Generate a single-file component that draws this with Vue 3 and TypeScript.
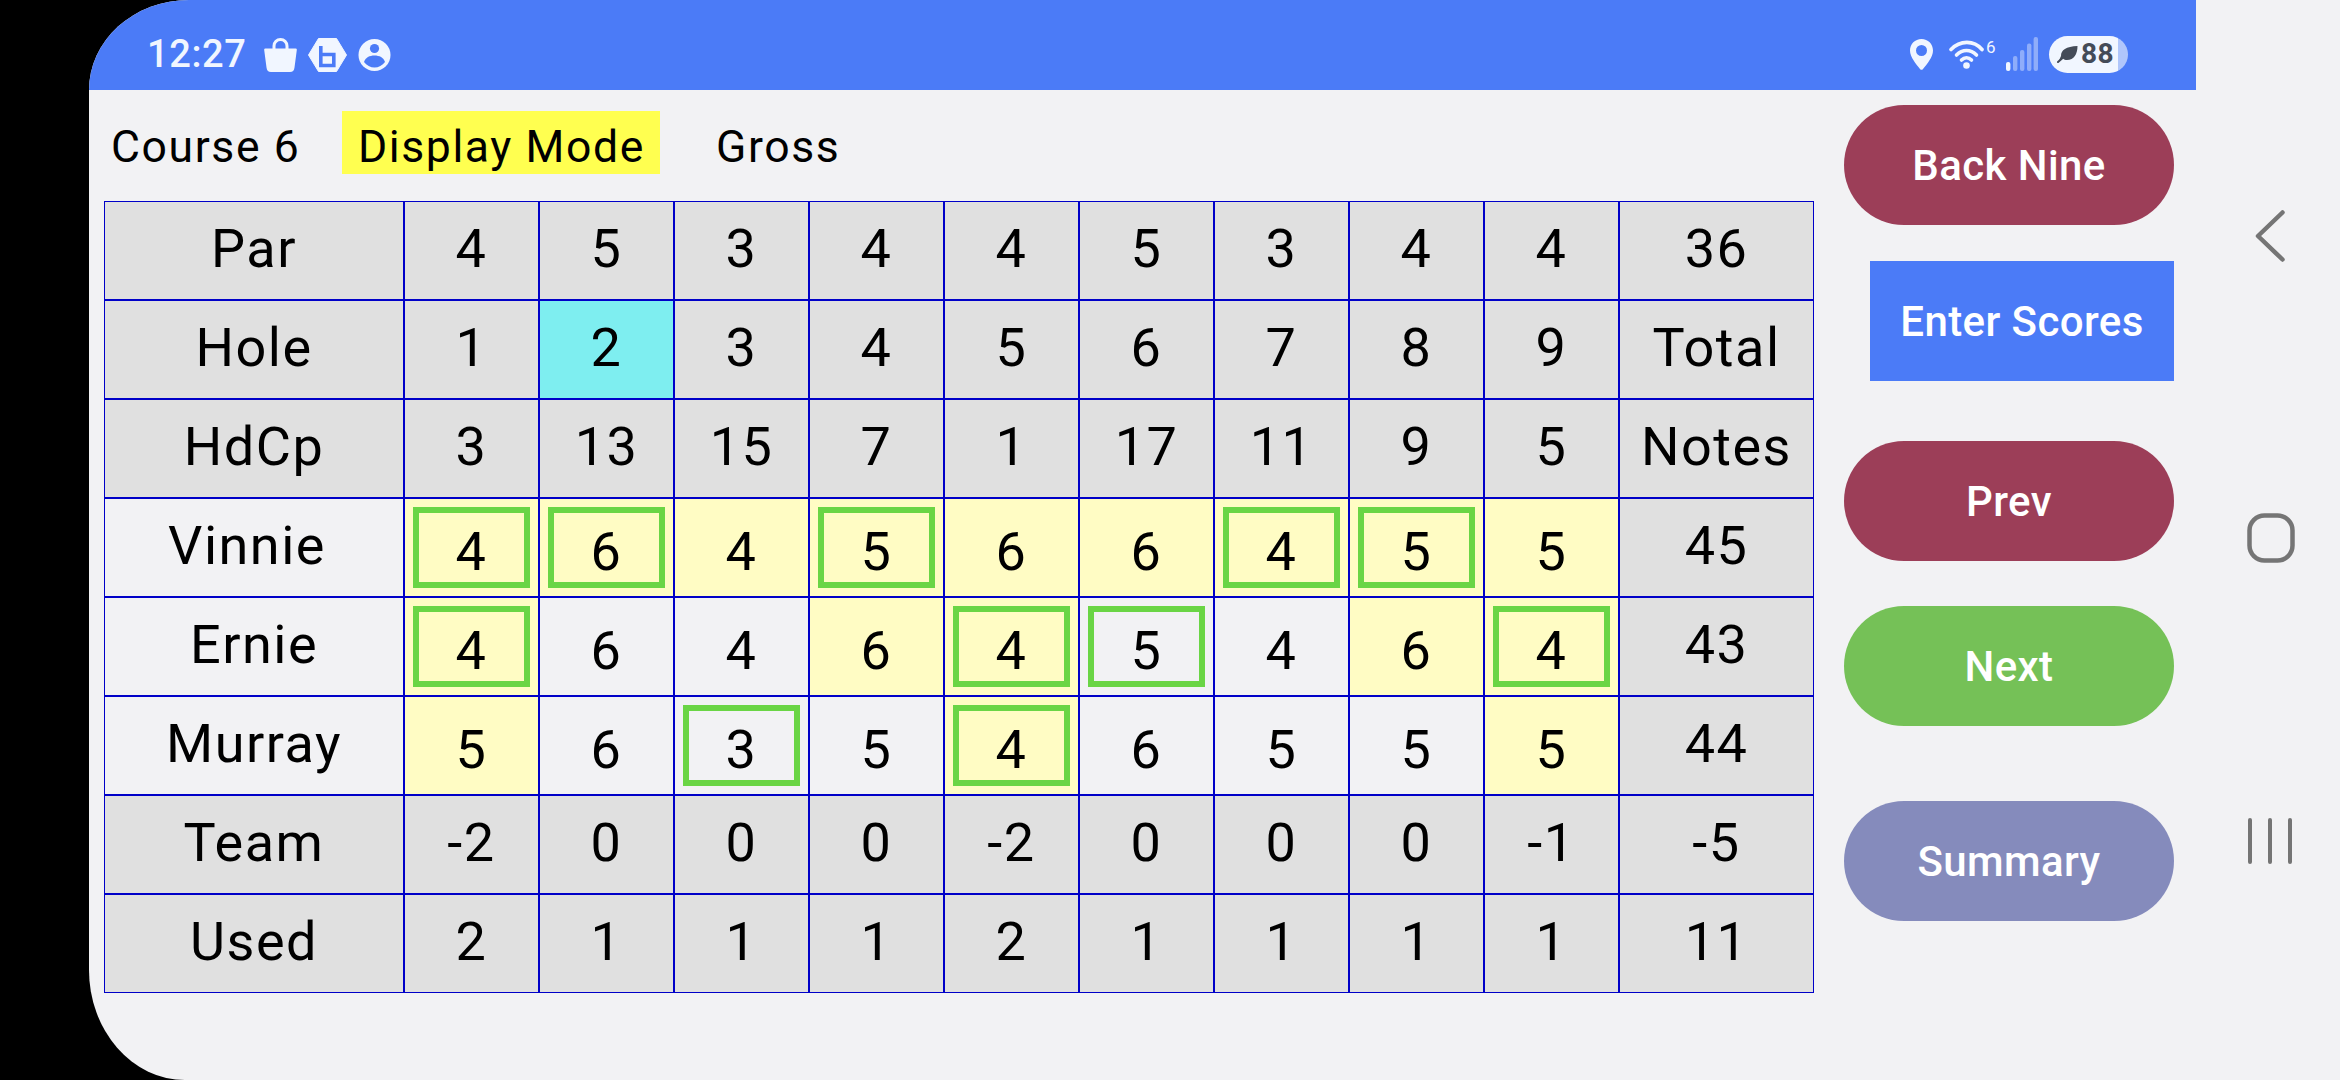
<script setup lang="ts">
interface Cell { v: string; y?: boolean; box?: boolean; hl?: boolean }

const gray = (vals: string[]): Cell[] => vals.map((v) => ({ v }));
const grayRows = [
  { name: 'Par', cells: gray(['4', '5', '3', '4', '4', '5', '3', '4', '4']), last: '36' },
  {
    name: 'Hole',
    cells: [{ v: '1' }, { v: '2', hl: true }, ...gray(['3', '4', '5', '6', '7', '8', '9'])],
    last: 'Total',
  },
  { name: 'HdCp', cells: gray(['3', '13', '15', '7', '1', '17', '11', '9', '5']), last: 'Notes' },
];
const bottomRows = [
  { name: 'Team', cells: gray(['-2', '0', '0', '0', '-2', '0', '0', '0', '-1']), last: '-5' },
  { name: 'Used', cells: gray(['2', '1', '1', '1', '2', '1', '1', '1', '1']), last: '11' },
];
const c = (v: string, y = false, box = false): Cell => ({ v, y, box });
const players = [
  {
    name: 'Vinnie',
    shift: true,
    cells: [c('4', true, true), c('6', true, true), c('4', true), c('5', true, true), c('6', true), c('6', true), c('4', true, true), c('5', true, true), c('5', true)],
    last: '45',
  },
  {
    name: 'Ernie',
    shift: false,
    cells: [c('4', true, true), c('6'), c('4'), c('6', true), c('4', true, true), c('5', false, true), c('4'), c('6', true), c('4', true, true)],
    last: '43',
  },
  {
    name: 'Murray',
    shift: false,
    cells: [c('5', true), c('6'), c('3', false, true), c('5'), c('4', true, true), c('6'), c('5'), c('5'), c('5', true)],
    last: '44',
  },
];
</script>

<template>
  <div class="device">
    <div class="gutter"></div>
    <div class="screen">
      <div class="main">
        <div class="status">
          <div class="status-left">
            <span class="clock">12:27</span>
            <svg class="i-bag" width="33" height="34" viewBox="0 0 33 34">
              <path d="M10 12V8a6.5 6.5 0 0 1 13 0v4" fill="none" stroke="#f1f6ff" stroke-width="3" />
              <path d="M1.5 10.5H31.500a1.300 1.300 0 0 1 1.300 1.500L30.500 29.500Q30 34 26 34H7Q3 34 2.500 29.500L.2 12a1.300 1.300 0 0 1 1.300-1.500Z" fill="#f1f6ff" />
            </svg>
            <svg class="i-hex" width="39" height="34" viewBox="0 0 39 34">
              <path d="M10.500 0.500H28.500L38.500 17 28.500 33.500H10.500L0.500 17Z" fill="#f1f6ff" stroke="#f1f6ff" stroke-linejoin="round" />
              <path d="M12.800 8V27.500H25.800V16.500H12.800" fill="none" stroke="#4b7bf7" stroke-width="3.600" />
            </svg>
            <svg class="i-person" width="33" height="32" viewBox="0 0 33 32">
              <circle cx="16.500" cy="16" r="16" fill="#f1f6ff" />
              <circle cx="16.500" cy="9.500" r="4.600" fill="#4b7bf7" />
              <path d="M6 23C7.500 18.500 11.500 16.500 16.500 16.500S25.500 18.500 27 23C24.500 26.500 20.500 28.500 16.500 28.500S8.500 26.500 6 23Z" fill="#4b7bf7" />
            </svg>
          </div>
          <div class="status-right">
            <svg width="23" height="31" viewBox="0 0 23 31">
              <path fill-rule="evenodd" d="M11.500 0C5 0 0 5 0 11.500 0 18 6 25 10 30a2 2 0 0 0 3 0C17 25 23 18 23 11.500 23 5 18 0 11.500 0ZM11.500 6a5.500 5.500 0 1 1 0 11 5.500 5.500 0 0 1 0-11Z" fill="#f1f6ff" />
            </svg>
            <svg class="i-wifi" width="35" height="29" viewBox="0 0 35 29">
              <g fill="none" stroke="#f1f6ff" stroke-width="3.600" stroke-linecap="round">
                <path d="M2 9.500C11 0 25 0 33 9.500" />
                <path d="M7.500 15C13.500 9 21.500 9 27.500 15" />
                <path d="M12.500 20C15.500 17 19.500 17 22.500 20" />
              </g>
              <circle cx="17.500" cy="25.500" r="3.300" fill="#f1f6ff" />
            </svg>
            <span class="wifi-six">6</span>
            <svg class="i-signal" width="32" height="34" viewBox="0 0 32 34">
              <rect x="0" y="25" width="4.400" height="9" rx="2" fill="#f1f6ff" />
              <rect x="7" y="19" width="4.400" height="15" rx="2" fill="#8fadfa" />
              <rect x="14" y="13" width="4.400" height="21" rx="2" fill="#8fadfa" />
              <rect x="21" y="6.500" width="4.400" height="27.500" rx="2" fill="#8fadfa" />
              <rect x="27.600" y="0" width="4.400" height="34" rx="2" fill="#8fadfa" />
            </svg>
            <div class="battery">
              <svg width="21" height="18" viewBox="0 0 21 18">
                <path d="M4 11C4 5 9 1.500 20.500 1 20.500 9 17 15 10 15 8.500 15 7 14.500 6 13.500L1.500 16.500" fill="#444b58" />
                <path d="M1 17 9 10" stroke="#444b58" stroke-width="2" stroke-linecap="round" />
              </svg>
              <span class="batt-num">88</span>
            </div>
          </div>
        </div>

        <div class="content">
          <div class="left">
            <div class="head">
              <span class="course">Course 6</span>
              <span class="mode">Display Mode</span>
              <span class="gross">Gross</span>
            </div>
            <div class="grid">
              <template v-for="r in grayRows" :key="r.name">
                <div class="cell gray up">{{ r.name }}</div>
                <div v-for="(x, i) in r.cells" :key="i" class="cell gray up" :class="{ hl: x.hl }">{{ x.v }}</div>
                <div class="cell gray up">{{ r.last }}</div>
              </template>
              <template v-for="p in players" :key="p.name">
                <div class="cell up" :class="{ shift: p.shift }">{{ p.name }}</div>
                <div v-for="(x, i) in p.cells" :key="i" class="cell score" :class="{ yellow: x.y }">
                  <span v-if="x.box" class="box"></span>
                  <span class="val">{{ x.v }}</span>
                </div>
                <div class="cell gray up">{{ p.last }}</div>
              </template>
              <template v-for="r in bottomRows" :key="r.name">
                <div class="cell gray up">{{ r.name }}</div>
                <div v-for="(x, i) in r.cells" :key="i" class="cell gray up">{{ x.v }}</div>
                <div class="cell gray up">{{ r.last }}</div>
              </template>
            </div>
          </div>
          <div class="actions">
            <button class="btn pill maroon">Back Nine</button>
            <button class="btn enter">Enter Scores</button>
            <button class="btn pill maroon prev">Prev</button>
            <button class="btn pill green">Next</button>
            <button class="btn pill slate">Summary</button>
          </div>
        </div>
      </div>

      <div class="nav">
        <svg class="n-back" width="38" height="56" viewBox="0 0 38 56">
          <path d="M32.500 4.500 8 28 32.500 51.500" fill="none" stroke="#757575" stroke-width="4.500" stroke-linecap="round" stroke-linejoin="round" />
        </svg>
        <svg class="n-home" width="48" height="50" viewBox="0 0 48 50">
          <rect x="2.500" y="2.500" width="43" height="45" rx="15" fill="none" stroke="#757575" stroke-width="4.500" />
        </svg>
        <svg class="n-recent" width="44" height="46" viewBox="0 0 44 46">
          <path d="M2 2V44M22 2V44M42 2V44" stroke="#757575" stroke-width="4" stroke-linecap="round" />
        </svg>
      </div>
    </div>
  </div>
</template>

<style scoped>
.device {
  display: flex;
  width: 2340px;
  height: 1080px;
  background: #000;
  font-family: Roboto, "Liberation Sans", sans-serif;
  color: #000;
  overflow: hidden;
}
.gutter {
  flex: 0 0 89px;
}
.screen {
  flex: 1;
  display: flex;
  background: #f2f2f4;
  overflow: hidden;
  border-top-left-radius: 100px 90px;
  border-bottom-left-radius: 96px 110px;
}
.main {
  flex: 0 0 2107px;
  display: flex;
  flex-direction: column;
}
.status {
  flex: 0 0 90px;
  background: #4b7bf7;
  display: flex;
  justify-content: space-between;
  align-items: center;
  padding: 0 68px 0 58px;
}
.status-left,
.status-right {
  display: flex;
  align-items: center;
}
.status-left {
  padding-top: 20px;
}
.status-right {
  padding-top: 18px;
}
.clock {
  color: #f1f6ff;
  font-size: 38px;
  font-weight: 500;
  letter-spacing: 0.6px;
  line-height: 40px;
  width: 117px;
  margin-top: -3px;
}
.i-hex {
  margin-left: 11px;
}
.i-person {
  margin-left: 11px;
}
.i-wifi {
  margin-left: 16px;
}
.wifi-six {
  width: 12px;
  height: 20px;
  margin-left: 2px;
  margin-top: -14px;
  font-size: 17px;
  line-height: 20px;
  color: #f1f6ff;
}
.i-signal {
  margin-left: 8px;
}
.battery {
  margin-left: 11px;
  width: 79px;
  height: 37px;
  border-radius: 19px;
  background: linear-gradient(to right, #f1f6ff 69px, #b0c6fb 69px);
  display: flex;
  align-items: center;
  padding-left: 8px;
  box-sizing: border-box;
  color: #444b58;
}
.batt-num {
  font-size: 28px;
  font-weight: 700;
  margin-left: 3px;
  line-height: 28px;
  letter-spacing: 0.5px;
}
.content {
  flex: 1;
  display: flex;
  padding-left: 15px;
}
.left {
  flex: 0 0 1710px;
  display: flex;
  flex-direction: column;
}
.head {
  display: flex;
  align-items: center;
  height: 63px;
  margin-top: 21px;
  margin-bottom: 27px;
  font-size: 44.5px;
  letter-spacing: 1.6px;
}
.course {
  margin-left: 7px;
  width: 231px;
  padding-top: 8px;
}
.mode {
  background: #ffff50;
  width: 318px;
  height: 63px;
  padding: 8px 0 0 16px;
  box-sizing: border-box;
  display: flex;
  align-items: center;
}
.gross {
  margin-left: 56px;
  padding-top: 8px;
}
.grid {
  display: grid;
  grid-template-columns: 300px repeat(9, 135px) 195px;
  grid-auto-rows: 99px;
  width: 1710px;
}
.cell {
  box-sizing: border-box;
  border: 1px solid #0000c8;
  display: flex;
  align-items: center;
  justify-content: center;
  font-size: 54px;
  letter-spacing: 1.5px;
  line-height: 1;
  position: relative;
}
.gray {
  background: #e0e0e0;
}
.up {
  padding-bottom: 3px;
}
.shift {
  padding-right: 14px;
}
.hl {
  background: #7eeef0;
}
.score {
  padding-top: 8px;
}
.yellow {
  background: #fffcc4;
}
.box {
  position: absolute;
  left: 8px;
  top: 8px;
  right: 8px;
  bottom: 8px;
  border: 6px solid #6ad545;
}
.val {
  position: relative;
}
.actions {
  margin-left: 30px;
  flex: 0 0 330px;
  display: flex;
  flex-direction: column;
  align-items: flex-end;
  padding-top: 15px;
}
.btn {
  border: 0;
  padding: 0;
  color: #fff;
  font-family: inherit;
  font-size: 42px;
  font-weight: 500;
  letter-spacing: 0.4px;
  height: 120px;
  display: flex;
  align-items: center;
  justify-content: center;
}
.pill {
  width: 330px;
  border-radius: 60px;
}
.maroon {
  background: #9c3e58;
}
.enter {
  width: 304px;
  margin-top: 36px;
  background: #4b7bf7;
}
.prev {
  margin-top: 60px;
}
.green {
  background: #75c157;
  margin-top: 45px;
}
.slate {
  background: #858bbc;
  margin-top: 75px;
}
.nav {
  flex: 1;
  position: relative;
}
.n-back {
  position: absolute;
  left: 54px;
  top: 208px;
}
.n-home {
  position: absolute;
  left: 51px;
  top: 513px;
}
.n-recent {
  position: absolute;
  left: 52px;
  top: 818px;
}
</style>
